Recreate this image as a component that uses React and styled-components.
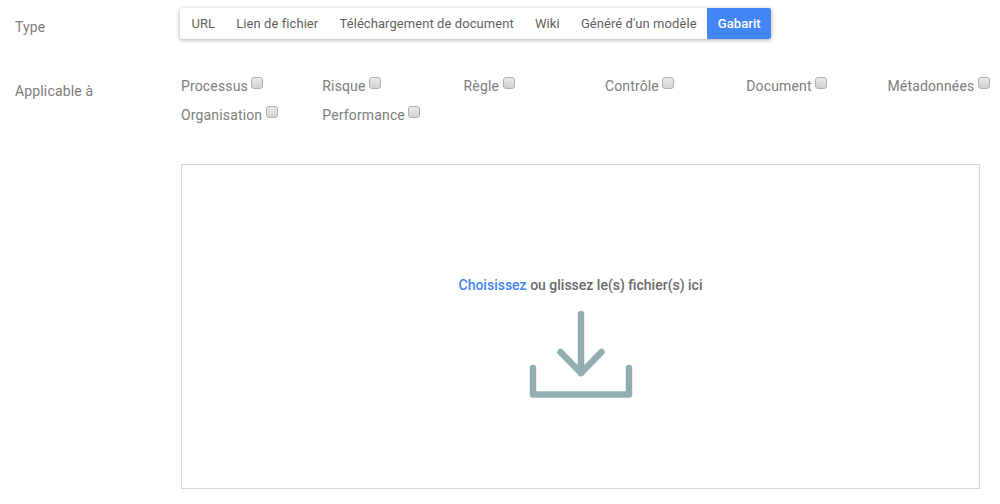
import React from 'react'
import styled, { createGlobalStyle } from 'styled-components'

const GlobalStyle = createGlobalStyle`
  html, body {
    margin: 0;
    background: #fff;
    font-family: Roboto, "Liberation Sans", sans-serif;
    color: #666;
  }
`

const Page = styled.div`
  width: 1000px;
  height: 504px;
  overflow: hidden;
  box-sizing: border-box;
  padding-top: 8px;
`

const Row = styled.div`
  display: flex;
  margin-bottom: ${(p) => p.$gap || 0}px;
`

const Label = styled.div`
  width: 181px;
  flex: none;
  box-sizing: border-box;
  padding: ${(p) => p.$top}px 0 0 15px;
  font-size: 14px;
  line-height: 20px;
  letter-spacing: 0.15px;
  color: #7d7d7d;
`

const Tabs = styled.div`
  display: flex;
  margin-left: -1px;
  height: 31px;
  background: #fff;
  border-radius: 2px;
  box-shadow: 0 1px 4px rgba(0, 0, 0, 0.35);
`

const Tab = styled.div`
  padding: 0 10.6px 0 ${(p) => (p.$first ? 11.4 : 10.6)}px;
  font-size: 13px;
  line-height: 31px;
  letter-spacing: 0.07px;
  font-weight: ${(p) => (p.$active ? 500 : 400)};
  color: ${(p) => (p.$active ? '#fff' : '#5f5f5f')};
  background: ${(p) => (p.$active ? '#4285f4' : 'transparent')};
  border-radius: ${(p) => (p.$active ? '0 2px 2px 0' : '0')};
`

const Options = styled.div`
  display: grid;
  grid-template-columns: repeat(6, 141.3px);
  grid-auto-rows: 29px;
  padding-top: 1px;
`

const Option = styled.label`
  display: flex;
  align-items: flex-start;
  gap: 3.5px;
  font-size: 14px;
  line-height: 29px;
  letter-spacing: 0.15px;
  color: #7d7d7d;
  white-space: nowrap;
`

const Check = styled.input.attrs({ type: 'checkbox' })`
  appearance: none;
  width: 12px;
  height: 12px;
  margin: 5px 0 0;
  box-sizing: border-box;
  border: 1px solid #b0b0b0;
  border-radius: 3px;
  background: linear-gradient(#ebebeb, #d2d2d2);
`

const DropZone = styled.div`
  width: 799px;
  height: 325px;
  box-sizing: border-box;
  border: 1px solid #d6d6d6;
  display: flex;
  flex-direction: column;
  align-items: center;
  padding-top: 111px;
`

const DropText = styled.div`
  font-size: 14px;
  line-height: 18px;
  font-weight: 500;
  color: #6a6a6a;
  margin-bottom: 15px;
`

const Pick = styled.span`
  color: #4285f4;
`

const types = ['URL', 'Lien de fichier', 'Téléchargement de document', 'Wiki', "Généré d'un modèle", 'Gabarit']
const targets = ['Processus', 'Risque', 'Règle', 'Contrôle', 'Document', 'Métadonnées', 'Organisation', 'Performance']

const DownloadIcon = () => (
  <svg width="104" height="90" viewBox="0 0 104 90" fill="none" stroke="#93aeb1" strokeWidth="6.5" strokeLinecap="round" strokeLinejoin="round">
    <path d="M52 5V64" />
    <path d="M31.5 43L52 64L72.5 43" />
    <path d="M4 59V85.5H100V59" />
  </svg>
)

const App = () => {
  return (
    <Page>
      <GlobalStyle />
      <Row $gap={32}>
        <Label $top={9}>Type</Label>
        <Tabs>
          {types.map((t, i) => (
            <Tab key={t} $first={i === 0} $active={t === 'Gabarit'}>{t}</Tab>
          ))}
        </Tabs>
      </Row>
      <Row $gap={34}>
        <Label $top={10}>Applicable à</Label>
        <Options>
          {targets.map((t) => (
            <Option key={t}>
              {t}
              <Check />
            </Option>
          ))}
        </Options>
      </Row>
      <Row>
        <Label />
        <DropZone>
          <DropText><Pick>Choisissez</Pick> ou glissez le(s) fichier(s) ici</DropText>
          <DownloadIcon />
        </DropZone>
      </Row>
    </Page>
  )
}

export default App
